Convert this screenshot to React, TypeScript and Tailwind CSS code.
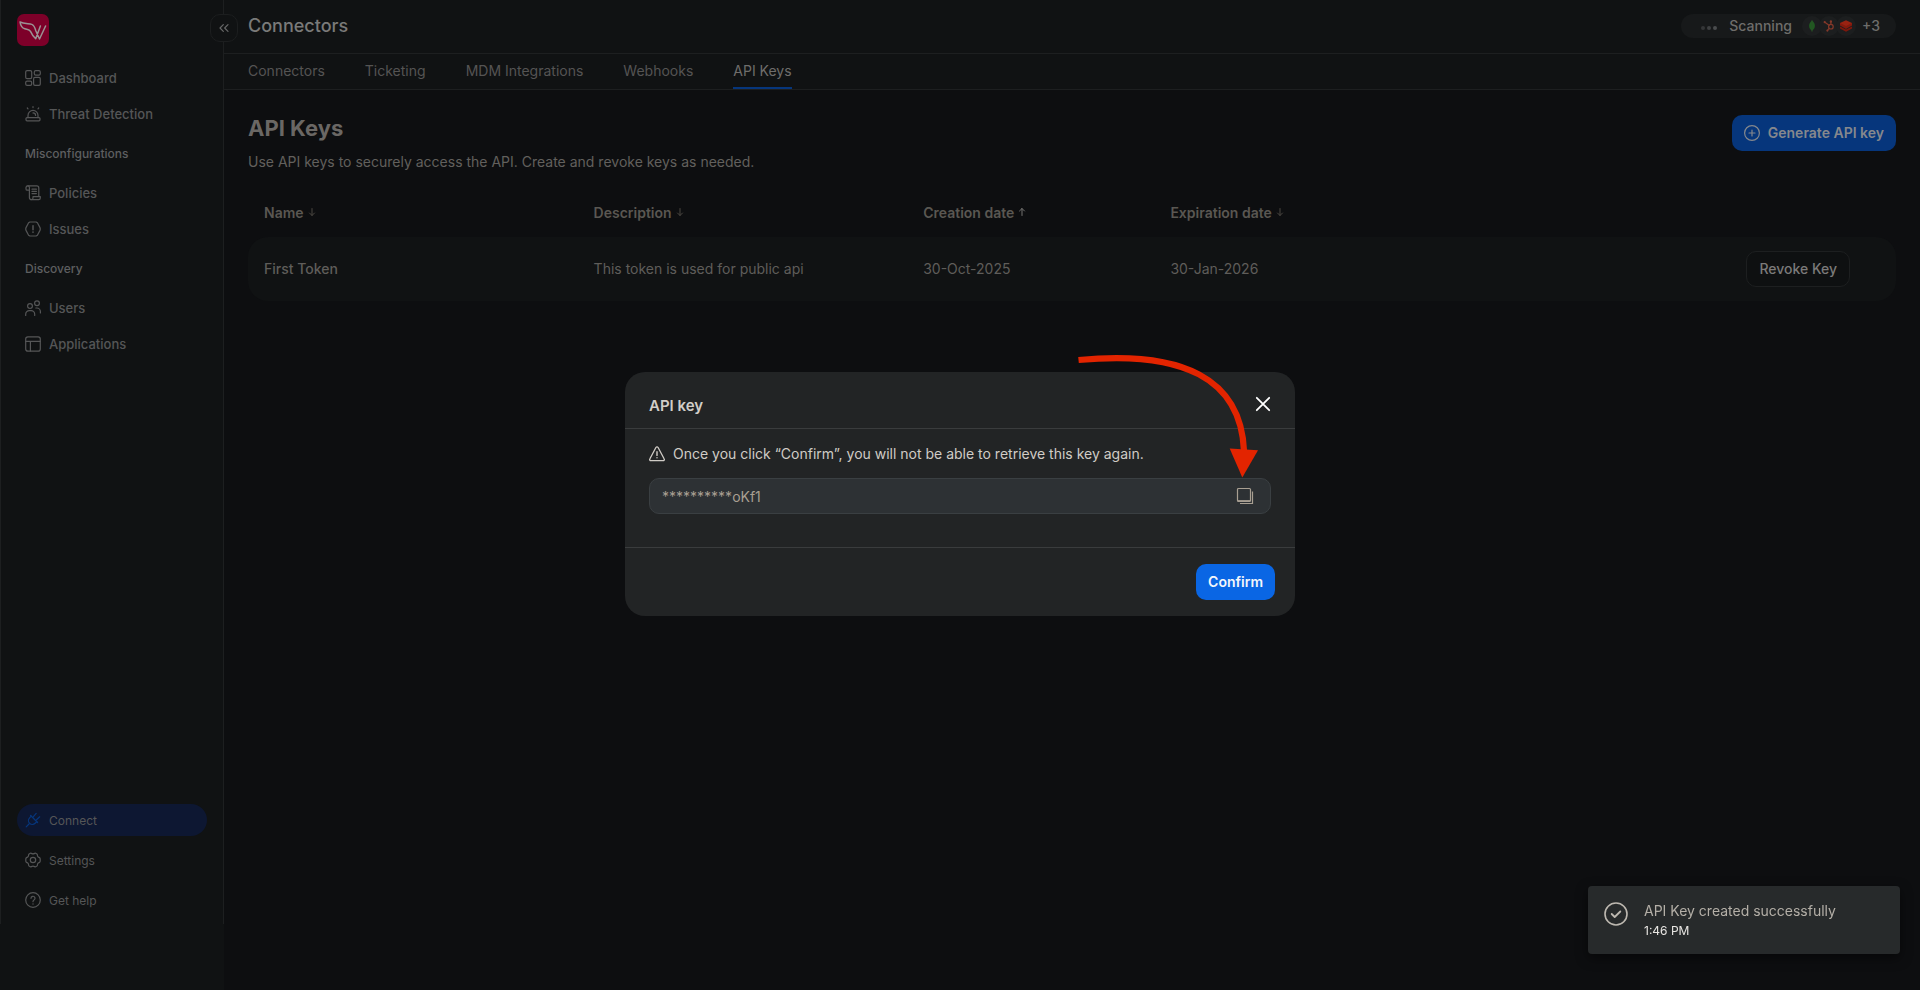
import type { ReactNode } from "react";
import { ChevronsLeft } from "lucide-react";

type IconProps = { children: ReactNode; className?: string };

function Icon({ children, className = "size-4" }: IconProps) {
  return (
    <svg
      viewBox="0 0 16 16"
      fill="none"
      stroke="currentColor"
      strokeWidth="1.2"
      strokeLinecap="round"
      strokeLinejoin="round"
      aria-hidden="true"
      className={`shrink-0 ${className}`}
    >
      {children}
    </svg>
  );
}

const icons = {
  dashboard: (
    <Icon>
      <rect x="0.7" y="0.7" width="6" height="8" rx="1.4" />
      <rect x="9.3" y="0.7" width="6" height="4.4" rx="1.4" />
      <rect x="8.6" y="7.4" width="6.7" height="7.9" rx="1.4" />
      <rect x="0.7" y="11.2" width="6" height="4.1" rx="1.4" />
    </Icon>
  ),
  threat: (
    <Icon>
      <path d="M3 11.6V9.4a5 5 0 0 1 10 0v2.2" />
      <rect x="1" y="11.6" width="14" height="3.2" rx="1" />
      <path d="M8 6.9a2.6 2.6 0 0 1 2.6 2.6" />
      <path d="M8 .6v1M2.3 2l.7.8M13.7 2l-.7.8" />
    </Icon>
  ),
  policies: (
    <Icon>
      <path d="M3.6 5.2H2.3A1.3 1.3 0 0 1 1 3.9V2.6A1.8 1.8 0 0 1 2.8.9h9a2 2 0 0 1 2 2V11" />
      <path d="M2.8.9a1.6 1.6 0 0 1 1.6 1.6v9.9A2.2 2.2 0 0 0 6.6 14.6" />
      <path d="M6.6 14.6A1.5 1.5 0 0 0 8 13.1V11.6h7.3v1.4a1.6 1.6 0 0 1-1.6 1.6Z" />
      <path d="M7 4.2h4.4M7 6.4h4.4M7 8.6h4.4" />
    </Icon>
  ),
  issues: (
    <Icon>
      <path d="M4.9 1h6.2l1.3.8 2.6 4.8.3 1.4-.3 1.4-2.6 4.8-1.3.8H4.9l-1.3-.8L1 9.4.7 8 1 6.6l2.6-4.8Z" />
      <path d="M8 4.8v4" strokeWidth="1.5" />
      <path d="M8 11.1v.1" strokeWidth="1.6" />
    </Icon>
  ),
  users: (
    <Icon>
      <circle cx="5" cy="6" r="2.4" />
      <circle cx="12" cy="3.2" r="2.4" />
      <path d="M.7 15.4v-1.2a3.6 3.6 0 0 1 3.6-3.6h1.8a3.6 3.6 0 0 1 3.6 3.6v1.2" />
      <path d="M10.8 8h1a3.6 3.6 0 0 1 3.6 3.6v1.4" />
    </Icon>
  ),
  applications: (
    <Icon>
      <rect x="0.7" y="0.9" width="14.6" height="14.2" rx="2.2" />
      <path d="M.7 5.4h14.6M5.4 5.4v9.7" />
    </Icon>
  ),
  connect: (
    <Icon>
      <path d="M1.2 14.8 4 12" />
      <path d="m6.200 4.200-1.600 1.600a3.900 3.900 0 0 0 0 5.500 3.900 3.900 0 0 0 5.500 0l1.700-1.600" />
      <path d="m5.600 3.500 7 7M8.400 4.600 11.200 1.400M11.500 7.700l3.200-2.900" />
    </Icon>
  ),
  settings: (
    <Icon>
      <path d="M5.3 1.2c.7-.4 1.2.6 2.7.6s2-1 2.700-.6l1.200.7c.8.5.2 1.500.9 2.600s1.900.7 2.100 1.700c.4.6.3.9.3 1.800s.1 1.200-.3 1.800c-.2 1-1.400.6-2.100 1.700s-.1 2.100-.9 2.600l-1.200.7c-.7.4-1.200-.6-2.700-.6s-2 1-2.700.6l-1.200-.7c-.8-.5-.2-1.500-.9-2.600s-1.900-.7-2.100-1.700C.7 9.200.8 8.900.8 8s-.1-1.200.3-1.800c.2-1 1.400-.6 2.100-1.700s.1-2.100.9-2.600Z" />
      <circle cx="8" cy="8" r="2.7" />
    </Icon>
  ),
  help: (
    <Icon>
      <circle cx="8" cy="8" r="7.3" />
      <path d="M6 6.3a2 2 0 1 1 3 1.700c-.6.4-1 .7-1 1.500v.2" />
      <path d="M8 11.900v.1" strokeWidth="1.4" />
    </Icon>
  ),
};

function Logo() {
  return (
    <svg viewBox="0 0 32 32" className="size-8" role="img" aria-label="Home">
      <rect width="32" height="32" rx="7" fill="#7d0029" />
      <path
        d="M3 8c4 1.700 9 1.600 11.800 2.400 2.200.7 3.100 3.100 4.100 6.600l3.600 8L28.600 12M3 8c.5 3.400 2 5.900 4.800 6.800 2.600.8 4.700.5 5.700 2.600 1 2.200 2.700 5.300 5.200 7.400L23.400 12"
        fill="none"
        stroke="#9b9294"
        strokeWidth="1.5"
        strokeLinecap="round"
        strokeLinejoin="round"
      />
    </svg>
  );
}

function NavItem({ icon, label }: { icon: ReactNode; label: string }) {
  return (
    <a href="#" className="flex h-9 items-center gap-2 px-2 text-[13px] font-medium text-[#555657]">
      {icon}
      <span className="pt-0.5">{label}</span>
    </a>
  );
}

function NavHeading({ children }: { children: ReactNode }) {
  return <h2 className="flex h-[43px] items-center px-2 text-xs font-medium text-[#5e5f60]">{children}</h2>;
}

function Sidebar() {
  return (
    <aside className="relative w-56 shrink-0 bg-[#101213] pb-[66px]">
      <div className="flex h-full flex-col border-x border-[#1d1f20] px-4 pb-2">
        <div className="flex h-[60px] items-center">
          <Logo />
        </div>
        <nav aria-label="Main">
          <NavItem icon={icons.dashboard} label="Dashboard" />
          <NavItem icon={icons.threat} label="Threat Detection" />
          <NavHeading>Misconfigurations</NavHeading>
          <NavItem icon={icons.policies} label="Policies" />
          <NavItem icon={icons.issues} label="Issues" />
          <NavHeading>Discovery</NavHeading>
          <NavItem icon={icons.users} label="Users" />
          <NavItem icon={icons.applications} label="Applications" />
        </nav>
        <nav aria-label="Account" className="mt-auto flex flex-col gap-2 text-xs text-[#555657]">
          <a href="#" aria-current="page" className="flex h-8 items-center gap-2 rounded-full bg-[#0d1732] px-2">
            <span className="text-[#06367c]">{icons.connect}</span>
            <span className="pt-0.5">Connect</span>
          </a>
          <a href="#" className="flex h-8 items-center gap-2 px-2">
            {icons.settings}
            <span className="pt-0.5">Settings</span>
          </a>
          <a href="#" className="flex h-8 items-center gap-2 px-2">
            {icons.help}
            <span className="pt-0.5">Get help</span>
          </a>
        </nav>
      </div>
      <button
        type="button"
        aria-label="Collapse sidebar"
        className="absolute top-3.5 -right-3.5 flex size-7 items-center justify-center rounded-[10px] border border-[#1c1e1f] bg-[#101213] text-[#666767]"
      >
        <ChevronsLeft className="size-4" strokeWidth={1.8} />
      </button>
    </aside>
  );
}

function ScanningPill() {
  return (
    <div className="flex h-6 items-center rounded-full bg-[#17191a] pr-4 pl-5 text-sm font-medium text-[#6e6d6b]">
      <svg viewBox="0 0 16 4" className="mt-1 mr-3 h-1 w-4" aria-hidden="true">
        <circle cx="2" cy="2" r="2" fill="#343637" />
        <circle cx="8" cy="2" r="2" fill="#3e4041" />
        <circle cx="14" cy="2" r="2" fill="#4a4c4d" />
      </svg>
      Scanning
      <div className="mr-1.5 ml-2.5 flex -space-x-[3px]">
        <span className="flex size-5 items-center justify-center rounded-full bg-[#1c1e1f]">
          <svg viewBox="0 0 12 12" className="size-3" aria-hidden="true">
            <path d="M6 .3c2 1.900 2.900 3.600 2.900 5.500 0 2.100-1 3.600-2.500 4.800L6 12l-.4-1.400C4 9.400 3.100 7.900 3.100 5.800 3.100 3.900 4.200 2.200 6 .3Z" fill="#1f5a20" />
            <path d="M6 .3v11.400" stroke="#2f4f2c" strokeWidth=".7" />
          </svg>
        </span>
        <span className="flex size-5 items-center justify-center rounded-full bg-[#1c1e1f]">
          <svg viewBox="0 0 12 12" className="size-3" fill="none" stroke="#86392a" strokeWidth="1.2" strokeLinecap="round" aria-hidden="true">
            <circle cx="7.900" cy="6.700" r="2.300" />
            <path d="M7.900 4.200V2M6 5.300 2.200 2.500M6.200 8.400 4.700 10.200" />
            <circle cx="7.900" cy="1.500" r=".6" />
            <circle cx="1.700" cy="2.200" r=".5" />
            <circle cx="4.400" cy="10.600" r=".5" />
          </svg>
        </span>
        <span className="flex size-5 items-center justify-center rounded-full bg-[#1c1e1f]">
          <svg viewBox="0 0 12 12" className="size-3" aria-hidden="true">
            <path d="M0 6.400v2L6 11.800l6-3.400v-2L6 9.600Z" fill="#7d170c" />
            <path d="M0 2.900v2.700L6 8.900l6-3.300V2.900Z" fill="#861a0d" />
            <path d="M0 2.900 6 .2l6 2.700-6 3Z" fill="#9a2312" />
          </svg>
        </span>
      </div>
      +3
    </div>
  );
}

const tabs = ["Connectors", "Ticketing", "MDM Integrations", "Webhooks", "API Keys"];

const columns = [
  { label: "Name", ascending: false, width: "w-[20%]" },
  { label: "Description", ascending: false, width: "w-[20%]" },
  { label: "Creation date", ascending: true, width: "w-[15%]" },
  { label: "Expiration date", ascending: false, width: "w-[15%]" },
];

function SortArrow({ ascending }: { ascending: boolean }) {
  return (
    <svg
      viewBox="0 0 8 10"
      fill="none"
      stroke="currentColor"
      strokeLinecap="round"
      strokeLinejoin="round"
      className={`mb-0.5 h-2.5 w-2 ${ascending ? "text-[#747371]" : "text-[#4a4641]"}`}
      aria-hidden="true"
    >
      {ascending ? <path d="M4 8.500v-7M1.500 4 4 1.500 6.500 4" /> : <path d="M4 1.500v7M1.500 6 4 8.500 6.500 6" />}
    </svg>
  );
}

function KeysTable() {
  return (
    <table className="mt-[17px] w-full table-fixed text-left text-sm text-[#5f5d5a]">
      <thead>
        <tr className="h-12 text-[#5a5752]">
          {columns.map((column) => (
            <th key={column.label} scope="col" className={`px-4 font-semibold ${column.width}`}>
              <button type="button" className="flex items-center gap-1">
                {column.label}
                <SortArrow ascending={column.ascending} />
              </button>
            </th>
          ))}
          <th scope="col" aria-label="Actions" className="w-[30%]" />
        </tr>
      </thead>
      <tbody>
        <tr className="h-16 bg-[#101213]">
          <td className="rounded-l-[20px] px-4 font-medium">First Token</td>
          <td className="px-4">This token is used for public api</td>
          <td className="px-4">30-Oct-2025</td>
          <td className="px-4">30-Jan-2026</td>
          <td className="rounded-r-[20px] pr-[46px] text-right">
            <button
              type="button"
              className="h-9 rounded-[10px] border border-[#1d1f20] bg-[#0e1011] px-3 font-medium text-[#7b7a79]"
            >
              Revoke Key
            </button>
          </td>
        </tr>
      </tbody>
    </table>
  );
}

function KeyDialog() {
  return (
    <div className="fixed inset-0 flex items-center justify-center pb-0.5">
      <div role="dialog" aria-modal="true" aria-labelledby="dialog-title" className="w-[670px] rounded-[20px] bg-[#222425]">
        <div className="flex h-[57px] items-center justify-between border-b border-[#3a3c3d] pt-2.5 pr-[23px] pl-6">
          <h2 id="dialog-title" className="pt-0.5 text-[15px] font-semibold text-[#d2cec8]">
            API key
          </h2>
          <button type="button" aria-label="Close" className="text-white">
            <svg viewBox="0 0 18 18" className="size-[18px]" stroke="currentColor" strokeWidth="1.8" strokeLinecap="round" aria-hidden="true">
              <path d="m2.800 1.800 12.400 12.400M15.200 1.800 2.800 14.200" />
            </svg>
          </button>
        </div>
        <div className="border-b border-[#3a3c3d] px-6 pt-[15px] pb-[33px]">
          <p className="flex h-5 items-center gap-2 text-sm text-[#d0ccc6]">
            <Icon>
              <path d="M6.900 1.500a1.300 1.300 0 0 1 2.200 0l6 11.300a1.200 1.200 0 0 1-1.100 1.900H2a1.200 1.200 0 0 1-1.100-1.900Z" strokeWidth="1.3" />
              <path d="M8 5.800v3.600M8 11.700v.1" strokeWidth="1.4" />
            </Icon>
            Once you click “Confirm”, you will not be able to retrieve this key again.
          </p>
          <div className="mt-3.5 flex h-9 items-center rounded-[10px] border border-[#3a3f42] bg-[#2d3134] pr-4 pl-3 text-[#a89f92]">
            <input
              type="text"
              readOnly
              aria-label="API key"
              defaultValue="**********oKf1"
              className="min-w-0 flex-1 bg-transparent pt-0.5 text-sm outline-none"
            />
            <button type="button" aria-label="Copy key">
              <svg viewBox="0 0 18 18" className="size-[18px]" fill="none" stroke="currentColor" aria-hidden="true">
                <rect x="1.500" y="1.500" width="13" height="13" rx="1" strokeWidth="1.2" />
                <path d="M2 14h12" strokeWidth="1.8" />
                <path d="M16.500 4.500v12H4" strokeWidth="1.2" />
              </svg>
            </button>
          </div>
        </div>
        <div className="flex justify-end px-5 py-4">
          <button type="button" className="h-9 rounded-[10px] bg-[#0a66e4] px-3 text-sm font-semibold text-[#f3f6fb]">
            Confirm
          </button>
        </div>
        {/* Callout arrow pointing at the copy button */}
        <svg viewBox="1070 345 200 140" className="pointer-events-none fixed top-[345px] left-[calc(50%+110px)] h-[140px] w-[200px]" aria-hidden="true">
          <path d="M1078.500 360C1182 350 1241 378 1244 451" fill="none" stroke="#e32400" strokeWidth="6.2" />
          <path d="m1229.700 448.600 28.300 1.700-15.700 27.200Z" fill="#e32400" />
        </svg>
      </div>
    </div>
  );
}

function Toast() {
  return (
    <div role="status" className="fixed right-5 bottom-9 flex h-[68px] w-[312px] gap-4 rounded bg-[#272a2b] p-4 shadow-[0_4px_12px_rgba(0,0,0,0.5)]">
      <svg viewBox="0 0 24 24" className="size-6 shrink-0 text-[#bdb8b0]" fill="none" stroke="currentColor" strokeLinecap="round" strokeLinejoin="round" aria-hidden="true">
        <circle cx="12" cy="12" r="11" strokeWidth="1.6" />
        <path d="m7.700 12 3 3L16.300 9.500" strokeWidth="1.8" />
      </svg>
      <div>
        <p className="text-sm leading-[18px] text-[#b4afa7]">API Key created successfully</p>
        <p className="text-xs leading-[22px] text-[#e8e6e3]">1:46 PM</p>
      </div>
    </div>
  );
}

export default function App() {
  return (
    <div className="flex min-h-screen bg-[#0d0e10] font-['Inter',sans-serif]">
      <Sidebar />
      <div className="min-w-0 flex-1">
        <header className="bg-[#101213]">
          <div className="flex h-[54px] items-center justify-between border-b border-[#1d1f20] px-6 pb-0.5">
            <h1 className="text-lg font-medium text-[#7a7a79]">Connectors</h1>
            <ScanningPill />
          </div>
          <nav aria-label="Sections" className="flex h-9 gap-10 border-b border-[#1d1f20] px-6 text-sm text-[#555453]">
            {tabs.map((tab) => (
              <a
                key={tab}
                href="#"
                className={
                  tab === "API Keys"
                    ? "flex items-center border-b-2 border-[#06367c] text-[#6f6d6b]"
                    : "flex items-center border-b-2 border-transparent"
                }
              >
                {tab}
              </a>
            ))}
          </nav>
        </header>
        <main className="px-6 pt-[25px]">
          <div className="flex items-start justify-between">
            <div>
              <h2 className="text-[22px] leading-[26px] font-bold text-[#6a6764]">API Keys</h2>
              <p className="mt-[11px] text-sm text-[#62605d]">
                Use API keys to securely access the API. Create and revoke keys as needed.
              </p>
            </div>
            <button
              type="button"
              className="flex h-9 items-center gap-2 rounded-[10px] bg-[#06367c] px-3 text-sm font-semibold text-[#85888d]"
            >
              <Icon>
                <circle cx="8" cy="8" r="7.400" />
                <path d="M8 5v6M5 8h6" />
              </Icon>
              Generate API key
            </button>
          </div>
          <KeysTable />
        </main>
      </div>
      <KeyDialog />
      <Toast />
    </div>
  );
}
